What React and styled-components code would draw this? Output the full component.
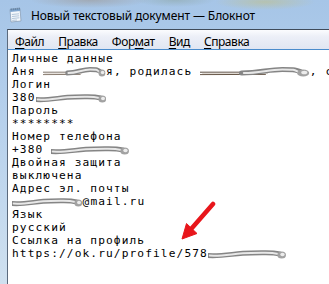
import styled, { createGlobalStyle } from 'styled-components';

const GlobalStyle = createGlobalStyle`
  html, body {
    margin: 0;
    padding: 0;
    width: 329px;
    height: 284px;
    overflow: hidden;
    background: #ffffff;
  }
`;

const CHAR_W = 7.84;

const Window = styled.div`
  position: relative;
  width: 329px;
  height: 284px;
  display: flex;
  flex-direction: column;
  overflow: hidden;
  background:
    radial-gradient(ellipse 60px 8px at 90px 0px, rgba(150, 120, 90, 0.35), transparent),
    radial-gradient(ellipse 50px 8px at 265px 2px, rgba(200, 190, 110, 0.45), transparent),
    radial-gradient(ellipse 40px 7px at 175px 0px, rgba(120, 140, 110, 0.3), transparent),
    linear-gradient(180deg, #a6c5e7 0%, #b1cdeb 30%, #c2d8ee 70%, #cfe0ef 100%);
`;

const TitleBar = styled.div`
  height: 29px;
  display: flex;
  align-items: center;
  gap: 8px;
  padding-left: 7px;
  flex-shrink: 0;
`;

const Title = styled.span`
  font-family: "Noto Sans", "Open Sans", sans-serif;
  font-size: 12px;
  color: #000;
  letter-spacing: -0.1px;
  margin-top: 1px;
`;

const Client = styled.div`
  flex: 1;
  margin-left: 7px;
  border-left: 1px solid #5b6a7d;
  border-top: 1px solid #3f4b5a;
  display: flex;
  flex-direction: column;
  background: #fff;
`;

const MenuBar = styled.div`
  height: 19px;
  display: flex;
  align-items: center;
  gap: 14px;
  padding-left: 7px;
  border-bottom: 1px solid #4a8ccc;
  background: linear-gradient(180deg, #fbfcfe 0%, #eceff7 35%, #e0e6f2 100%);
  flex-shrink: 0;
`;

const MenuItem = styled.span`
  font-family: "Noto Sans", "Open Sans", sans-serif;
  font-size: 12px;
  letter-spacing: -0.45px;
  color: #000;
  margin-top: 3px;

  u {
    text-decoration: underline;
    text-underline-offset: 2px;
    text-decoration-thickness: 1px;
  }
`;

const Editor = styled.div`
  position: relative;
  flex: 1;
  padding: 2px 0 0 4px;
  font-family: "DejaVu Sans Mono", "Liberation Mono", monospace;
  font-size: 11.2px;
  letter-spacing: 1.1px;
  line-height: 13px;
  color: #000;
  background: #fff;
`;

const Line = styled.div`
  height: 13px;
  white-space: pre;
`;

const SmudgeBox = styled.span`
  display: inline-block;
  width: ${(p) => p.$px}px;
  height: 13px;
  vertical-align: top;
`;

const ArrowSvg = styled.svg`
  position: absolute;
  left: 170px;
  top: 151px;
`;

function Smudge({ chars, thin }) {
  return (
    <SmudgeBox $px={chars * CHAR_W}>
      <svg width="100%" height="13" viewBox="0 0 100 13" preserveAspectRatio="none">
        <defs>
          <filter id="blur1" x="-10%" y="-50%" width="120%" height="200%">
            <feGaussianBlur stdDeviation="0.6" />
          </filter>
        </defs>
        {thin && (
          <g>
            <path d="M0 7.2 L62 7.2" stroke="#4a3c30" strokeWidth="0.9" />
            <path d="M0 9.6 L60 9.4" stroke="#5e4d3d" strokeWidth="0.9" />
            <path d="M2 8.4 L62 8.3" stroke="#d8d0c8" strokeWidth="0.9" />
          </g>
        )}
        <g filter="url(#blur1)">
          <path
            d={thin ? 'M38 8 C55 8, 62 4.5, 75 4.5 S88 5, 92 7' : 'M0 8.5 C20 9.5, 35 6, 55 6 S80 5, 92 7'}
            stroke="#858585"
            strokeWidth="5"
            fill="none"
            strokeLinecap="round"
          />
          <path
            d={thin ? 'M40 8 C55 8, 62 4.5, 75 4.5 S86 5, 90 7' : 'M2 8.5 C20 9.5, 35 6, 55 6 S78 5, 90 7'}
            stroke="#e8e8e8"
            strokeWidth="2"
            fill="none"
            strokeLinecap="round"
          />
          <ellipse cx="94" cy="8" rx="5.5" ry="3.6" fill="#a2a2a2" />
          <ellipse cx="95" cy="7.5" rx="2.8" ry="1.8" fill="#ececec" />
        </g>
      </svg>
    </SmudgeBox>
  );
}

function NotepadIcon() {
  return (
    <svg width="16" height="16" viewBox="0 0 16 16">
      <path d="M3 2.5 L13 1.5 L14 14 L4 15 Z" fill="#f4f8fc" stroke="#8aa0b8" strokeWidth="0.8" />
      <path d="M3 2.5 L13 1.5 L13.2 4 L3.2 5 Z" fill="#7fa6cf" />
      <path d="M4.2 1.4 v2 M6.2 1.2 v2 M8.2 1 v2 M10.2 0.8 v2 M12.2 0.6 v2" stroke="#4e6a88" strokeWidth="0.8" />
      <path d="M4.8 7.5 L12 6.8 M5 9.5 L12.2 8.8 M5.1 11.5 L12.4 10.8 M5.2 13.4 L10 13" stroke="#9fb7cf" strokeWidth="0.8" />
    </svg>
  );
}

function RedArrow() {
  return (
    <ArrowSvg width="44" height="46" viewBox="0 0 44 46">
      <path d="M35 3 L14 27" stroke="#e8161b" strokeWidth="4.5" strokeLinecap="round" />
      <path d="M4 38 L19 32.5 L8.5 22.5 Z" fill="#e8161b" stroke="#e8161b" strokeWidth="1" strokeLinejoin="round" />
    </ArrowSvg>
  );
}

export default function App() {
  return (
    <Window>
      <GlobalStyle />
      <TitleBar>
        <NotepadIcon />
        <Title>Новый текстовый документ — Блокнот</Title>
      </TitleBar>
      <Client>
        <MenuBar>
          <MenuItem><u>Ф</u>айл</MenuItem>
          <MenuItem><u>П</u>равка</MenuItem>
          <MenuItem>Фор<u>м</u>ат</MenuItem>
          <MenuItem><u>В</u>ид</MenuItem>
          <MenuItem><u>С</u>правка</MenuItem>
        </MenuBar>
        <Editor>
          <Line>Личные данные</Line>
          <Line>Аня <Smudge chars={8} thin />я, родилась <Smudge chars={14} thin />, с</Line>
          <Line>Логин</Line>
          <Line>380<Smudge chars={9} /></Line>
          <Line>Пароль</Line>
          <Line>********</Line>
          <Line>Номер телефона</Line>
          <Line>+380 <Smudge chars={10} /></Line>
          <Line>Двойная защита</Line>
          <Line>выключена</Line>
          <Line>Адрес эл. почты</Line>
          <Line><Smudge chars={9} />@mail.ru</Line>
          <Line>Язык</Line>
          <Line>русский</Line>
          <Line>Ссылка на профиль</Line>
          <Line>https://ok.ru/profile/578<Smudge chars={10} /></Line>
          <RedArrow />
        </Editor>
      </Client>
    </Window>
  );
}
